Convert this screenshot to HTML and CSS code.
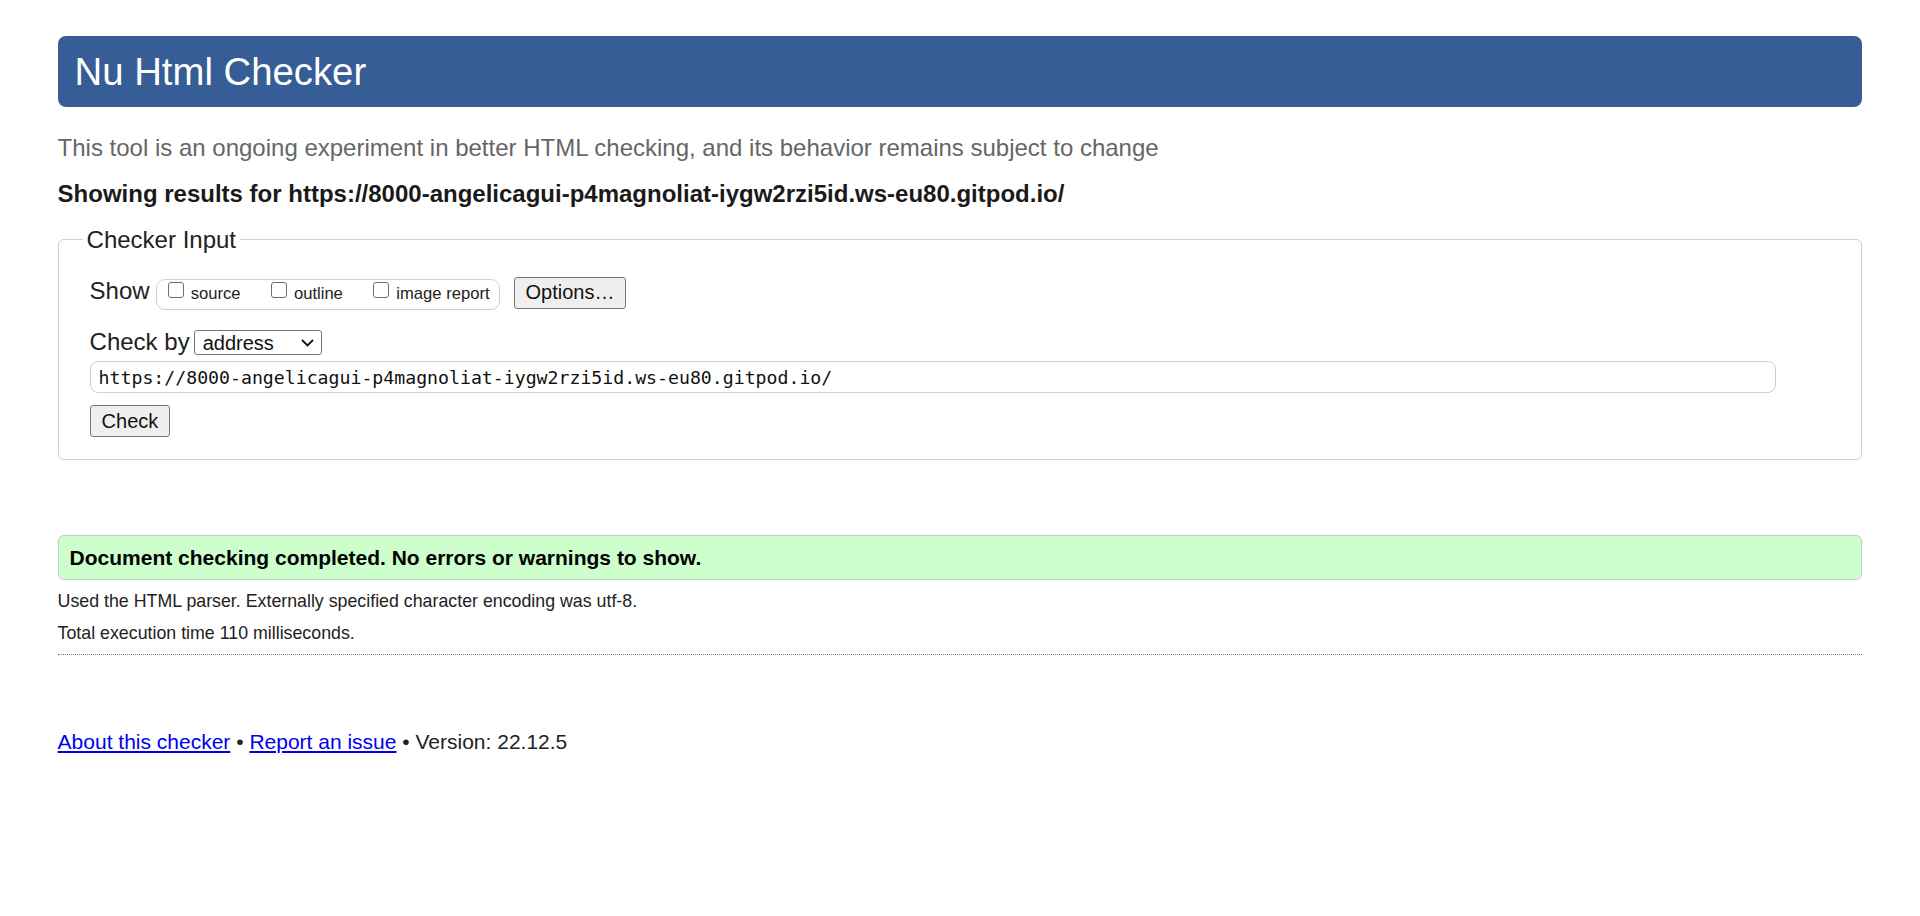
FILE: index.html
```html
<!DOCTYPE html>
<html lang="en">
<head>
<meta charset="utf-8">
<title>Nu Html Checker</title>
<link rel="stylesheet" href="styles.css">
</head>
<body>
<h1 class="title">Nu Html Checker</h1>
<p class="subtitle">This tool is an ongoing experiment in better HTML checking, and its behavior remains subject to change</p>
<p class="showing">Showing results for https://8000-angelicagui-p4magnoliat-iygw2rzi5id.ws-eu80.gitpod.io/</p>
<form class="form">
  <fieldset class="inputbox">
    <legend class="legend">Checker Input</legend>
    <div class="row row-show">
      <span class="label">Show</span>
      <span class="group">
        <label class="opt"><input class="cb" type="checkbox">source</label>
        <label class="opt"><input class="cb" type="checkbox">outline</label>
        <label class="opt"><input class="cb" type="checkbox">image report</label>
      </span>
      <button class="btn" type="button">Options…</button>
    </div>
    <div class="row row-by">
      <span class="label">Check by</span>
      <select class="select"><option>address</option></select>
    </div>
    <input class="url" type="text" value="https://8000-angelicagui-p4magnoliat-iygw2rzi5id.ws-eu80.gitpod.io/">
    <div class="submit-row"><button class="btn" type="button">Check</button></div>
  </fieldset>
</form>
<p class="success">Document checking completed. No errors or warnings to show.</p>
<p class="info">Used the HTML parser. Externally specified character encoding was utf-8.</p>
<p class="info">Total execution time 110 milliseconds.</p>
<hr class="sep">
<p class="footer"><a href="#" class="link">About this checker</a> • <a href="#" class="link">Report an issue</a> • Version: 22.12.5</p>
</body>
</html>
```

FILE: styles.css
```css
html, body {
  background: #fff;
  color: #222;
  font-family: "Liberation Sans", Arial, sans-serif;
}
body {
  margin: 0;
  padding: 36px 3% 20px;
  font-size: 20px;
}
.title {
  margin: 0;
  background: #365d95;
  color: #fff;
  font-weight: normal;
  font-size: 38.3px;
  line-height: 44px;
  padding: 13.5px 17px;
  border-radius: 8px;
}
.subtitle {
  margin: 27px 0 0;
  font-size: 24px;
  color: #666;
}
.showing {
  margin: 18.4px 0 0;
  font-size: 24px;
  font-weight: bold;
  color: #1a1a1a;
}
.form {
  margin: 17.4px 0 0;
}
.inputbox {
  margin: 0;
  border: 1px solid #cfcfcf;
  border-radius: 6px;
  padding: 23.2px 31px 22px 31px;
  min-width: 0;
}
.legend {
  font-size: 24px;
  margin-left: -7px;
  padding: 0 4px;
  color: #222;
}
.row {
  display: flex;
  align-items: baseline;
}
.label {
  font-size: 24px;
}
.row-show .label {
  margin-right: 6px;
}
.group {
  display: inline-flex;
  align-items: baseline;
  gap: 30.5px;
  border: 1px solid #cfcfcf;
  border-radius: 9px;
  padding: 3.5px 9px 4.5px 11px;
  font-size: 16.6px;
}
.opt {
  display: inline-flex;
  align-items: baseline;
}
.cb {
  appearance: none;
  -webkit-appearance: none;
  width: 16px;
  height: 16px;
  margin: 0 7px 0 0;
  border: 1px solid #6d6d6d;
  border-radius: 3px;
  background: #fff;
  position: relative;
  top: -1px;
}
.btn {
  margin-left: 14px;
  height: 32px;
  padding: 0 11px;
  font-family: "Liberation Sans", Arial, sans-serif;
  font-size: 20px;
  color: #111;
  background: #efefef;
  border: 1px solid #767676;
  border-radius: 3px;
}
.row-by {
  margin-top: 18px;
}
.row-by .label {
  margin-right: 4px;
}
.select {
  appearance: none;
  -webkit-appearance: none;
  width: 128px;
  height: 25px;
  padding: 0 0 0 8px;
  font-family: "Liberation Sans", Arial, sans-serif;
  font-size: 20px;
  color: #111;
  border: 1px solid #767676;
  border-radius: 3px;
  background: #fff url("data:image/svg+xml;utf8,<svg xmlns='http://www.w3.org/2000/svg' width='13' height='8' viewBox='0 0 13 8'><path d='M1 1l5.5 5.5L12 1' fill='none' stroke='%23111' stroke-width='1.8'/></svg>") no-repeat right 7px center;
}
.url {
  display: block;
  box-sizing: border-box;
  margin-top: 5.2px;
  width: 96.85%;
  height: 32px;
  padding: 0 8px;
  border: 1px solid #cfcfcf;
  border-radius: 8px;
  font-family: "DejaVu Sans Mono", "Liberation Mono", monospace;
  font-size: 18.2px;
  color: #111;
  background: #fff;
}
.submit-row {
  margin-top: 12px;
}
.submit-row .btn {
  margin-left: 0;
}
.success {
  margin: 74.8px 0 0;
  background: #ccffcc;
  border: 1px solid #c2cec2;
  border-radius: 6px;
  padding: 10.5px 11px 8.5px;
  font-weight: bold;
  font-size: 21px;
  color: #000;
}
.info {
  margin: 10.8px 0 0;
  font-size: 17.8px;
  color: #222;
}
.sep {
  margin: 10px 0 0;
  border: 0;
  border-top: 1px dotted #777;
  height: 0;
}
.footer {
  margin: 75.8px 0 0;
  font-size: 21px;
  color: #222;
}
.link {
  color: #0000ee;
}
```
